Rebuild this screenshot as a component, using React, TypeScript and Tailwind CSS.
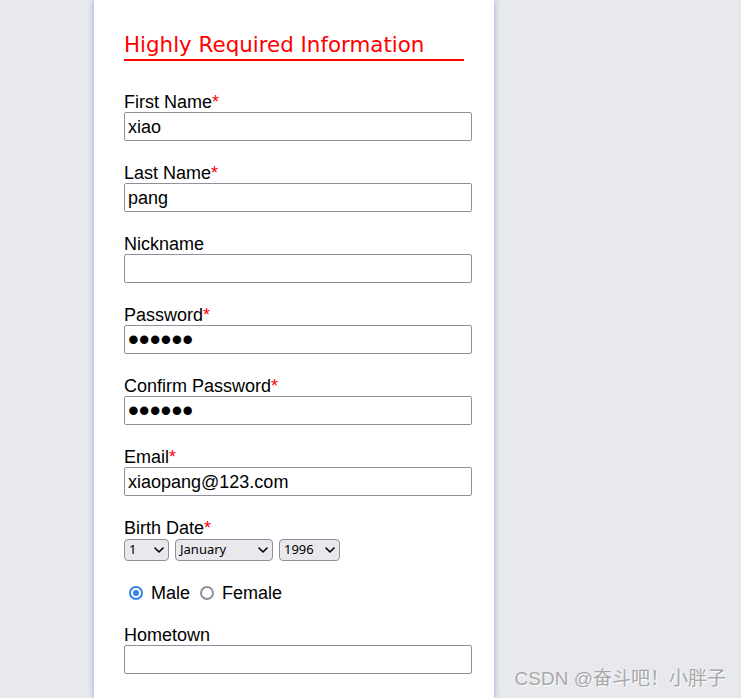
import { useState } from "react";

const fieldRows = [
  { label: "First Name", required: true, value: "xiao", secret: false },
  { label: "Last Name", required: true, value: "pang", secret: false },
  { label: "Nickname", required: false, value: "", secret: false },
  { label: "Password", required: true, value: "123456", secret: true },
  { label: "Confirm Password", required: true, value: "123456", secret: true },
  { label: "Email", required: true, value: "xiaopang@123.com", secret: false },
];

function Label({ text, required }: { text: string; required: boolean }) {
  return (
    <div className="h-[21px] leading-[23px] text-[18px] text-black">
      {text}
      {required && <span className="text-[#ff0000]">*</span>}
    </div>
  );
}

function Field({ label, required, value, secret }: { label: string; required: boolean; value: string; secret: boolean }) {
  return (
    <div className="mb-[21px]">
      <Label text={label} required={required} />
      <input
        type={secret ? "password" : "text"}
        defaultValue={value}
        className={
          secret
            ? "block w-[348px] h-[29px] border border-[#8f8f9d] rounded-[2px] px-[3px] text-[31px] leading-[27px] text-black outline-none bg-white"
            : "block w-[348px] h-[29px] border border-[#8f8f9d] rounded-[2px] px-[3px] pt-[2px] text-[18px] text-black outline-none bg-white"
        }
      />
    </div>
  );
}

function Radio({ checked, label, onClick }: { checked: boolean; label: string; onClick: () => void }) {
  return (
    <label className="flex items-center cursor-pointer" onClick={onClick}>
      <span
        className={
          checked
            ? "w-[14px] h-[14px] rounded-full border-2 border-[#3584e4] flex items-center justify-center"
            : "w-[14px] h-[14px] rounded-full border-2 border-[#8f8f9d]"
        }
      >
        {checked && <span className="w-[6px] h-[6px] rounded-full bg-[#3584e4]" />}
      </span>
      <span className="ml-[8px] text-[18px] text-black">{label}</span>
    </label>
  );
}

const selectCls =
  "h-[22px] border border-[#8f8f9d] rounded-[4px] bg-[#e9e9ed] text-[13px] text-black pl-[4px] pr-[4px] flex items-center justify-between";

function Chevron() {
  return (
    <svg width="10" height="6" viewBox="0 0 10 6" fill="none">
      <path d="M1 1l4 4 4-4" stroke="#000" strokeWidth="1.6" strokeLinecap="round" strokeLinejoin="round" />
    </svg>
  );
}

export default function App() {
  const [gender, setGender] = useState("male");

  return (
    <div
      className="relative h-[698px] overflow-hidden bg-[#e8e9ed]"
      style={{ fontFamily: '"Liberation Sans", Arial, sans-serif' }}
    >
      <div className="ml-[94px] w-[400px] h-full bg-white shadow-[0_0_6px_#8da4d8] pl-[30px] pt-[31px]">
        <h2
          className="w-[340px] border-b-2 border-[#ff0000] text-[#ff0000] text-[21.4px] leading-[27px] pb-[1px] mb-[30px]"
          style={{ fontFamily: '"DejaVu Sans", Verdana, sans-serif' }}
        >
          Highly Required Information
        </h2>

        {fieldRows.map((f) => (
          <Field key={f.label} {...f} />
        ))}

        <Label text="Birth Date" required />
        <div className="flex gap-[6px] mt-[1px]" style={{ fontFamily: '"Noto Sans", sans-serif' }}>
          <div className={selectCls + " w-[45px]"}>
            <span>1</span>
            <Chevron />
          </div>
          <div className={selectCls + " w-[98px]"}>
            <span>January</span>
            <Chevron />
          </div>
          <div className={selectCls + " w-[61px]"}>
            <span>1996</span>
            <Chevron />
          </div>
        </div>

        <div className="flex items-center gap-[10px] mt-[21px] ml-[5px] h-[22px]">
          <Radio checked={gender === "male"} label="Male" onClick={() => setGender("male")} />
          <Radio checked={gender === "female"} label="Female" onClick={() => setGender("female")} />
        </div>

        <div className="mt-[20px]">
          <Field label="Hometown" required={false} value="" secret={false} />
        </div>
      </div>

      <div
        className="absolute right-[15px] bottom-[5px] text-[19px] text-[#a8a8a8]"
        style={{
          fontFamily: '"Liberation Sans", "Noto Sans CJK SC", sans-serif',
          textShadow: "1px 1px 1px #ffffff",
        }}
      >
        CSDN @奋斗吧！小胖子
      </div>
    </div>
  );
}
